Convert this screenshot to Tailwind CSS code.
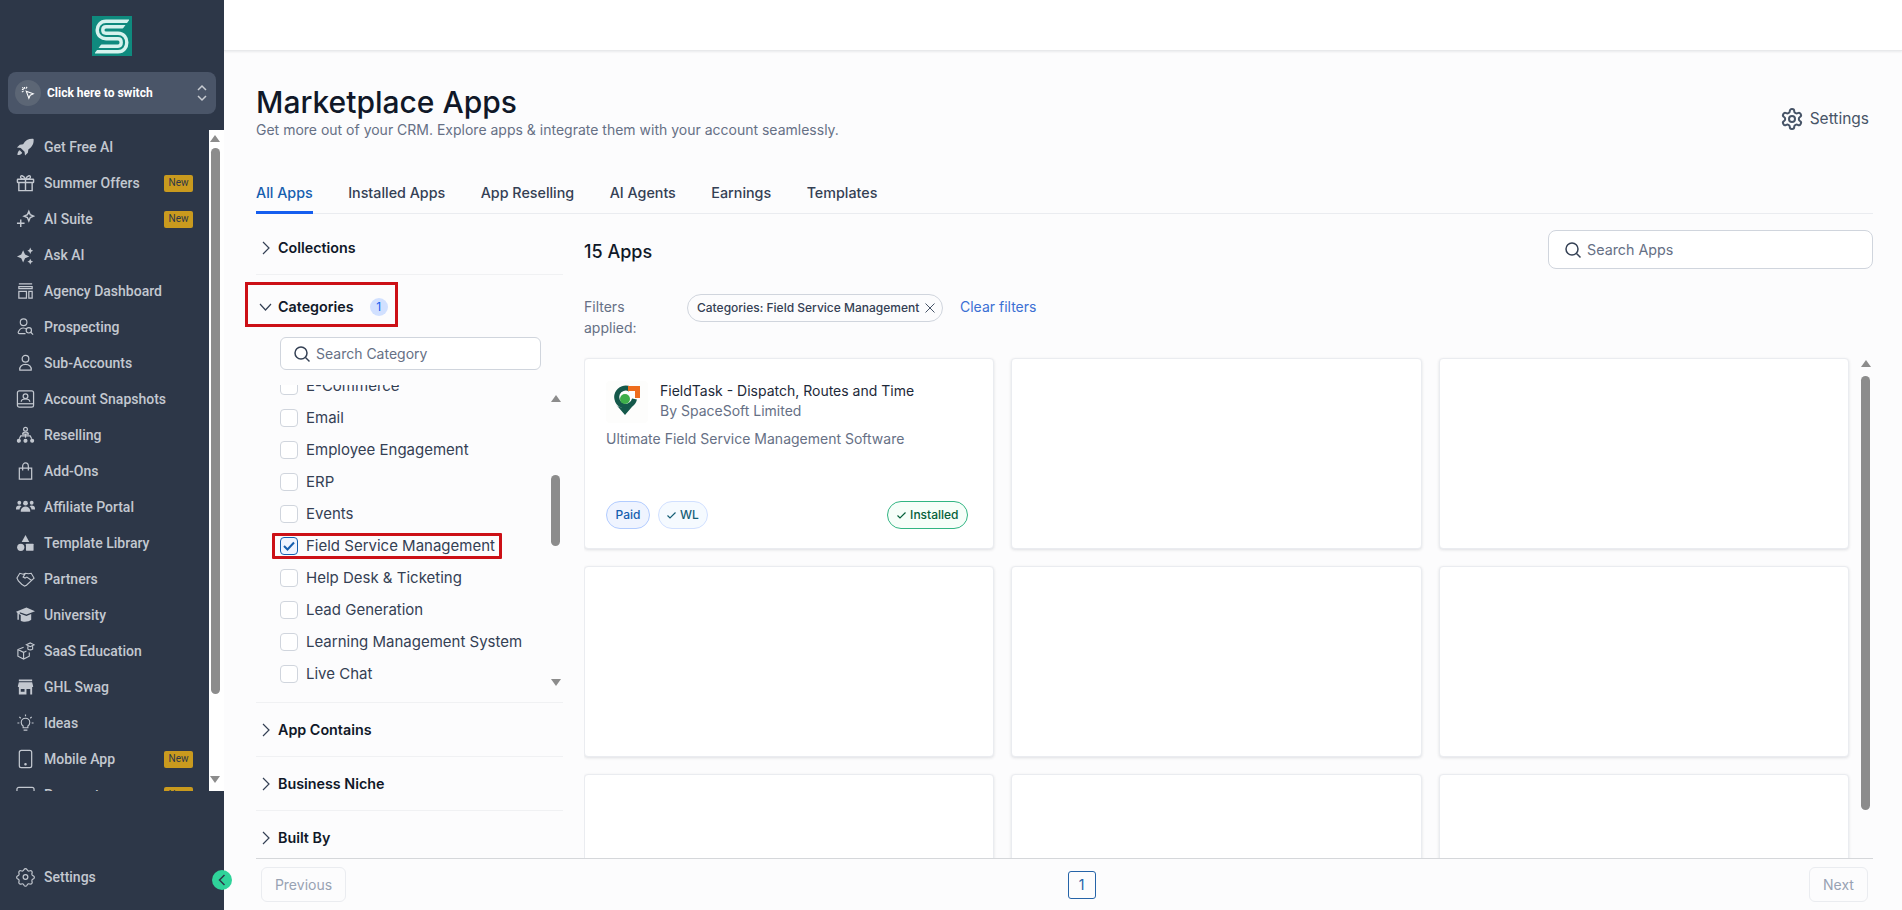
<!DOCTYPE html>
<html lang="en">
<head>
  <meta charset="UTF-8">
  <title>Marketplace Apps</title>
  <script src="https://cdn.jsdelivr.net/npm/@tailwindcss/browser@4"></script>
</head>
<body class="h-[910px] overflow-hidden bg-[#fcfcfd] font-['Inter',sans-serif] text-[#101828]">
<div class="flex h-[910px]">

  <!-- sidebar -->
  <aside class="relative flex w-[224px] shrink-0 flex-col bg-[#2d3748] font-['Roboto',sans-serif]">
    <div class="flex h-[72px] justify-center pt-4">
      <svg width="40" height="40" viewBox="0 0 40 40">
        <rect width="40" height="40" fill="#0f8a7e"/>
        <path d="M37 8H14C10 8 8 11 8 14C8 18 11 20 14 20H26C30 20 32 23 32 26.500C32 30 30 33 26 33H3" fill="none" stroke="#d6f3ee" stroke-width="9"/>
        <path d="M37 8H14C10 8 8 11 8 14C8 18 11 20 14 20H26C30 20 32 23 32 26.500C32 30 30 33 26 33H3" fill="none" stroke="#0f8a7e" stroke-width="2.200"/>
        <path d="M38 3L38 13L30.500 13zM2 38L2 28L9.500 28z" fill="#0f8a7e"/>
      </svg>
    </div>
    <div class="mx-2 flex h-[42px] items-center rounded-lg bg-[#4a5568] pl-[7px] pr-[9px]">
      <div class="flex h-[26px] w-[26px] items-center justify-center rounded-full bg-[#5c6675]">
        <svg width="14" height="14" viewBox="0 0 16 16" fill="none" stroke="#fff" stroke-width="1.200">
          <path d="M6 6l8 3-3.500 1.500L9 14z"/><path d="M4 1v2M1 4h2M1.500 1.500L3 3M7 1L5.500 3M1 7l2-1.500"/>
        </svg>
      </div>
      <span class="ml-[6px] flex-1 text-xs font-bold text-white">Click here to switch</span>
      <svg width="10" height="18" viewBox="0 0 10 18" fill="none" stroke="#c8ccd2" stroke-width="1.500"><path d="M1 6l4-4 4 4M1 12l4 4 4-4"/></svg>
    </div>

    <div class="mt-4 flex h-[661px] overflow-hidden">
      <nav class="-mt-px flex-1 overflow-hidden pl-4 pr-2 text-sm font-medium text-[#c3c8d0]">
        <a class="flex h-9 items-center gap-[9px]"><svg class="w-[19px] shrink-0" height="20" viewBox="0 0 20 20" fill="#c3c8d0"><path d="M18.500 1.500c-5-.5-8.500 1.500-11 5.500l-3.500.5L1 10.500l4 .5 4 4 .5 4 3-3 .5-3.500c4-2.500 6-6 5.500-11zM4 13.500c-1.500.5-2.500 2.500-2.500 5 2.500 0 4.500-1 5-2.500z"/></svg><span class="flex-1">Get Free AI</span></a>
        <a class="flex h-9 items-center gap-[9px]"><svg class="w-[19px] shrink-0" height="20" viewBox="0 0 20 20" fill="none" stroke="#c3c8d0" stroke-width="1.500"><rect x="1.500" y="6" width="17" height="3.500" rx=".5"/><path d="M3 9.500V18h14V9.500M10 6v12M10 6C8 1.500 4 1.500 5 4.500 5.500 6 10 6 10 6zM10 6c2-4.500 6-4.500 5-1.500C14.500 6 10 6 10 6z"/></svg><span class="flex-1">Summer Offers</span><span class="mr-2 flex h-[17px] w-[29px] items-center justify-center rounded-[2px] bg-[#c99a1e] text-[10px] font-normal text-[#2d3748]">New</span></a>
        <a class="flex h-9 items-center gap-[9px]"><svg class="w-[19px] shrink-0" height="20" viewBox="0 0 20 20" fill="none" stroke="#c3c8d0" stroke-width="1.500"><path d="M13.500 2l1.500 3.500L18.500 7 15 8.500 13.500 12 12 8.500 8.500 7 12 5.500zM5 10.500v8M1 14.500h8"/></svg><span class="flex-1">AI Suite</span><span class="mr-2 flex h-[17px] w-[29px] items-center justify-center rounded-[2px] bg-[#c99a1e] text-[10px] font-normal text-[#2d3748]">New</span></a>
        <a class="flex h-9 items-center gap-[9px]"><svg class="w-[19px] shrink-0" height="20" viewBox="0 0 20 20" fill="#c3c8d0"><path d="M7.500 5l2 4.500 4.500 2-4.500 2-2 4.500-2-4.500-4.500-2 4.500-2zM15 2l1 2.500L18 5.500 16 6.500 15 9 14 6.500 12 5.500 14 4.500zM15 14l1 2 2 1-2 1-1 2-1-2-2-1 2-1z"/></svg><span class="flex-1">Ask AI</span></a>
        <a class="flex h-9 items-center gap-[9px]"><svg class="w-[19px] shrink-0" height="20" viewBox="0 0 20 20" fill="none" stroke="#c3c8d0" stroke-width="1.300"><path d="M3 2.500h14M3 5.500h14v2H3zM3 10.500h8v7H3zM13.500 10.500H17v7h-3.500z"/></svg><span class="flex-1">Agency Dashboard</span></a>
        <a class="flex h-9 items-center gap-[9px]"><svg class="w-[19px] shrink-0" height="20" viewBox="0 0 20 20" fill="none" stroke="#c3c8d0" stroke-width="1.200"><circle cx="8" cy="5" r="3.500"/><path d="M10 17H3.500c-1 0-1.500-1-1-2 1-2 3-4 5-4 2 0 3 .5 4 1.500"/><circle cx="13.500" cy="13.500" r="2.800"/><path d="M15.500 15.500l2.500 2.500"/></svg><span class="flex-1">Prospecting</span></a>
        <a class="flex h-9 items-center gap-[9px]"><svg class="w-[19px] shrink-0" height="20" viewBox="0 0 20 20" fill="none" stroke="#c3c8d0" stroke-width="1.300"><circle cx="10" cy="5.500" r="3.500"/><path d="M4 17.500c-.5-3.500 2-6 6-6s6.500 2.500 6 6z"/></svg><span class="flex-1">Sub-Accounts</span></a>
        <a class="flex h-9 items-center gap-[9px]"><svg class="w-[19px] shrink-0" height="20" viewBox="0 0 20 20" fill="none" stroke="#c3c8d0" stroke-width="1.300"><rect x="1.500" y="1.500" width="17" height="17" rx="2"/><path d="M1.500 15h17"/><circle cx="10" cy="7" r="2.500"/><path d="M5.500 13c0-2 2-3 4.500-3s4.500 1 4.500 3"/></svg><span class="flex-1">Account Snapshots</span></a>
        <a class="flex h-9 items-center gap-[9px]"><svg class="w-[19px] shrink-0" height="20" viewBox="0 0 20 20" fill="none" stroke="#c3c8d0" stroke-width="1.300"><circle cx="10" cy="4" r="2"/><path d="M7 9c0-1.500 1.500-2 3-2s3 .5 3 2zM10 9v4M10 11H5l-1.500 3M10 11h5l1.500 3"/><circle cx="3" cy="16" r="1.500" fill="#c3c8d0"/><circle cx="10" cy="16" r="1.500" fill="#c3c8d0"/><circle cx="17" cy="16" r="1.500" fill="#c3c8d0"/></svg><span class="flex-1">Reselling</span></a>
        <a class="flex h-9 items-center gap-[9px]"><svg class="w-[19px] shrink-0" height="20" viewBox="0 0 20 20" fill="none" stroke="#c3c8d0" stroke-width="1.300"><path d="M3.500 7h13v11.500h-13zM7 9.500V5c0-2 1.500-3.500 3-3.500s3 1.500 3 3.500v4.500"/></svg><span class="flex-1">Add-Ons</span></a>
        <a class="flex h-9 items-center gap-[9px]"><svg class="w-[19px] shrink-0" height="20" viewBox="0 0 20 20" fill="#c3c8d0"><circle cx="10" cy="6" r="2.500"/><circle cx="3.500" cy="5.500" r="2"/><circle cx="16.500" cy="5.500" r="2"/><path d="M5 15c0-3.500 2-5.500 5-5.500s5 2 5 5.500zM0 11.500C0 9.500 1.500 8.500 3.500 8.500c1 0 1.700.3 2.300.8C4.800 10 4 11 3.700 12.500H0zM20 11.500c0-2-1.500-3-3.500-3-1 0-1.700.3-2.300.8 1 .7 1.800 1.700 2.100 3.200H20z"/></svg><span class="flex-1">Affiliate Portal</span></a>
        <a class="flex h-9 items-center gap-[9px]"><svg class="w-[19px] shrink-0" height="20" viewBox="0 0 20 20" fill="#c3c8d0"><path d="M10 1.500L14 9H6z"/><circle cx="5" cy="14.500" r="3.800"/><rect x="10.500" y="10.700" width="8" height="7.500" rx=".5"/></svg><span class="flex-1">Template Library</span></a>
        <a class="flex h-9 items-center gap-[9px]"><svg class="w-[19px] shrink-0" height="20" viewBox="0 0 20 20" fill="none" stroke="#c3c8d0" stroke-width="1.200"><path d="M1 9l3-5 3.500 1L10 4l3 .5L16 4l3 5-2.500 2.500-5.500 5-2 1-3-2-3.500-3.500zM10 4L7.500 8l2 1 2-1 5 3.500"/></svg><span class="flex-1">Partners</span></a>
        <a class="flex h-9 items-center gap-[9px]"><svg class="w-[19px] shrink-0" height="20" viewBox="0 0 20 20" fill="#c3c8d0"><path d="M0 6.500L11 2l9 4-9 3.500L4 7v1.500L11 11l5-2v6c-2 2-8 3-11 1v-6l-2-1v6H1.500V8z"/></svg><span class="flex-1">University</span></a>
        <a class="flex h-9 items-center gap-[9px]"><svg class="w-[19px] shrink-0" height="20" viewBox="0 0 20 20" fill="none" stroke="#c3c8d0" stroke-width="1.200"><path d="M8 6L2 8.500v7L8 18.500l6-3v-4M2 8.500l6 3v7M8 11.500l3-1.500"/><path d="M11 3.500L15 1.500l4 2-4 2zM12.500 5v3c1.500 1 3.500 1 5 0V5"/></svg><span class="flex-1">SaaS Education</span></a>
        <a class="flex h-9 items-center gap-[9px]"><svg class="w-[19px] shrink-0" height="20" viewBox="0 0 20 20" fill="#c3c8d0"><path d="M3 2h14v2H3zM3 5h14l1 4v1h-1v8h-2v-6H11v6H3v-8H2V9zM5 12h4v3H5z" fill-rule="evenodd"/></svg><span class="flex-1">GHL Swag</span></a>
        <a class="flex h-9 items-center gap-[9px]"><svg class="w-[19px] shrink-0" height="20" viewBox="0 0 20 20" fill="none" stroke="#c3c8d0" stroke-width="1.200"><path d="M10 5c-2.500 0-4.500 2-4.500 4.500 0 1.500.8 2.800 2 3.700V15h5v-1.800c1.200-.9 2-2.200 2-3.700C14.500 7 12.500 5 10 5zM8 17.500h4M10 1v2M3.500 3.500L5 5M16.500 3.500L15 5M1.500 10h2M16.500 10h2"/></svg><span class="flex-1">Ideas</span></a>
        <a class="flex h-9 items-center gap-[9px]"><svg class="w-[19px] shrink-0" height="20" viewBox="0 0 20 20" fill="none" stroke="#c3c8d0" stroke-width="1.300"><rect x="3.500" y="1" width="13" height="18" rx="2"/><circle cx="10" cy="15.500" r=".7" fill="#c3c8d0"/></svg><span class="flex-1">Mobile App</span><span class="mr-2 flex h-[17px] w-[29px] items-center justify-center rounded-[2px] bg-[#c99a1e] text-[10px] font-normal text-[#2d3748]">New</span></a>
        <a class="flex h-9 items-center gap-[9px]"><svg class="w-[19px] shrink-0" height="20" viewBox="0 0 20 20" fill="none" stroke="#c3c8d0" stroke-width="1.300"><rect x="1" y="2" width="18" height="14" rx="2"/></svg><span class="flex-1">Payments</span><span class="mr-2 flex h-[17px] w-[29px] items-center justify-center rounded-[2px] bg-[#c99a1e] text-[10px] font-normal text-[#2d3748]">New</span></a>
      </nav>
      <div class="flex w-[15px] shrink-0 flex-col items-center bg-white pr-[3px] pt-[5px]">
        <svg width="10" height="7" viewBox="0 0 10 7"><path d="M5 0l5 7H0z" fill="#8c8c8c"/></svg>
        <div class="mt-[6px] h-[546px] w-[9px] rounded-full bg-[#8c8c8c]"></div>
        <svg class="mt-auto mb-[8px]" width="10" height="7" viewBox="0 0 10 7"><path d="M0 0h10L5 7z" fill="#8c8c8c"/></svg>
      </div>
    </div>

    <div class="mt-[76px] flex items-center gap-[9px] pl-4 text-sm font-medium text-[#c3c8d0]">
      <svg width="19" height="20" viewBox="0 0 24 24" fill="none" stroke="#c3c8d0" stroke-width="1.500"><path d="M10.300 2.300a2 2 0 013.400 0l.7 1.200a2 2 0 002.200.9l1.400-.3a2 2 0 012.400 2.400l-.3 1.400a2 2 0 00.9 2.200l1.200.7a2 2 0 010 3.400l-1.200.7a2 2 0 00-.9 2.200l.3 1.400a2 2 0 01-2.400 2.400l-1.400-.3a2 2 0 00-2.200.9l-.7 1.200a2 2 0 01-3.400 0l-.7-1.200a2 2 0 00-2.200-.9l-1.400.3a2 2 0 01-2.400-2.400l.3-1.400a2 2 0 00-.9-2.200l-1.200-.7a2 2 0 010-3.400l1.200-.7a2 2 0 00.9-2.200l-.3-1.400a2 2 0 012.400-2.400l1.400.3a2 2 0 002.200-.9z"/><circle cx="12" cy="12" r="3"/></svg>
      <span>Settings</span>
    </div>
    <div class="absolute left-[212px] top-[870px] z-10 flex h-[20px] w-[20px] items-center justify-center rounded-full bg-[#2fd39a]">
      <svg width="8" height="12" viewBox="0 0 8 12" fill="none" stroke="#2d3748" stroke-width="1.500"><path d="M6.500 1L1.500 6l5 5"/></svg>
    </div>
  </aside>

  <!-- main -->
  <main class="flex min-w-0 flex-1 flex-col">
    <div class="h-[51px] shrink-0 border-b border-[#e8e9eb] bg-white shadow-[0_1px_2px_rgba(16,24,40,0.08)]"></div>

    <div class="flex min-h-0 flex-1 flex-col pl-8 pr-[29px]">
      <div class="flex h-[92px] shrink-0 items-start justify-between pt-[32px]">
        <div>
          <h1 class="text-[30px] leading-[38px] font-medium text-[#101828]">Marketplace Apps</h1>
          <p class="-mt-px text-sm leading-5 text-[#667085]">Get more out of your CRM. Explore apps &amp; integrate them with your account seamlessly.</p>
        </div>
        <div class="mt-[24px] mr-[4px] flex items-center gap-[6px] text-[15.500px] text-[#475467]">
          <svg width="24" height="24" viewBox="0 0 24 24" fill="none" stroke="#475467" stroke-width="2"><path d="M12.220 2h-.44a2 2 0 0 0-2 2v.18a2 2 0 0 1-1 1.730l-.43.25a2 2 0 0 1-2 0l-.15-.08a2 2 0 0 0-2.730.73l-.22.38a2 2 0 0 0 .73 2.730l.15.1a2 2 0 0 1 1 1.720v.51a2 2 0 0 1-1 1.740l-.15.09a2 2 0 0 0-.73 2.730l.22.38a2 2 0 0 0 2.730.73l.15-.08a2 2 0 0 1 2 0l.43.25a2 2 0 0 1 1 1.730V20a2 2 0 0 0 2 2h.44a2 2 0 0 0 2-2v-.18a2 2 0 0 1 1-1.730l.43-.25a2 2 0 0 1 2 0l.15.08a2 2 0 0 0 2.730-.73l.22-.39a2 2 0 0 0-.73-2.730l-.15-.08a2 2 0 0 1-1-1.740v-.5a2 2 0 0 1 1-1.740l.15-.09a2 2 0 0 0 .73-2.730l-.22-.38a2 2 0 0 0-2.730-.73l-.15.08a2 2 0 0 1-2 0l-.43-.25a2 2 0 0 1-1-1.730V4a2 2 0 0 0-2-2z"/><circle cx="12" cy="12" r="3"/></svg>
          Settings
        </div>
      </div>

      <div class="flex h-[71px] shrink-0 items-end gap-[35.500px] border-b border-[#eaecf0] text-[14.300px] font-medium text-[#344054]">
        <span class="-mb-px border-b-[3px] border-[#155eef] pb-[8px] text-[#155eaf]">All Apps</span>
        <span class="pb-[10px]">Installed Apps</span>
        <span class="pb-[10px]">App Reselling</span>
        <span class="pb-[10px]">AI Agents</span>
        <span class="pb-[10px]">Earnings</span>
        <span class="pb-[10px]">Templates</span>
      </div>

      <div class="flex min-h-0 flex-1 gap-[21px]">
        <!-- filters -->
        <div class="-ml-[14px] w-[321px] shrink-0 overflow-hidden pl-[14px]">
          <div class="flex h-[61px] items-center gap-2 border-b border-[#f0f1f3] pt-[8px] pl-[6px] text-[14.300px] font-semibold">
            <svg width="8" height="14" viewBox="0 0 8 14" fill="none" stroke="#344054" stroke-width="1.200"><path d="M1 1l6 6-6 6"/></svg>Collections
          </div>
          <div class="relative flex h-[62px] items-center gap-[6px] pt-[1px] pl-[3px] text-[14.300px] font-semibold">
            <div class="absolute left-[-11px] top-[7px] h-[45px] w-[153px] border-[3px] border-[#cc1016]"></div>
            <svg width="13" height="8" viewBox="0 0 13 8" fill="none" stroke="#344054" stroke-width="1.200"><path d="M1 1l5.500 6L12 1"/></svg>Categories
            <span class="ml-[10px] flex h-[18px] w-[18px] items-center justify-center rounded-full bg-[#d1e0ff] text-xs font-normal text-[#155eef]">1</span>
          </div>
          <div class="ml-[24px] flex h-[33px] w-[261px] items-center gap-[5px] rounded-md border border-[#d0d5dd] bg-white pl-[12px] text-sm text-[#667085]">
            <svg width="18" height="18" viewBox="0 0 18 18" fill="none" stroke="#344054" stroke-width="1.500"><circle cx="8" cy="8" r="6"/><path d="M12.500 12.500L16.500 16.500"/></svg>Search Category
          </div>
          <div class="relative mt-[15px] h-[318px] overflow-hidden border-b border-[#f0f1f3] pl-[24px]">
            <div class="-mt-[15px] text-[15px] text-[#344054]">
              <label class="flex h-8 items-center gap-2"><span class="h-[18px] w-[18px] rounded border border-[#d0d5dd] bg-white"></span>E-Commerce</label>
              <label class="flex h-8 items-center gap-2"><span class="h-[18px] w-[18px] rounded border border-[#d0d5dd] bg-white"></span>Email</label>
              <label class="flex h-8 items-center gap-2"><span class="h-[18px] w-[18px] rounded border border-[#d0d5dd] bg-white"></span>Employee Engagement</label>
              <label class="flex h-8 items-center gap-2"><span class="h-[18px] w-[18px] rounded border border-[#d0d5dd] bg-white"></span>ERP</label>
              <label class="flex h-8 items-center gap-2"><span class="h-[18px] w-[18px] rounded border border-[#d0d5dd] bg-white"></span>Events</label>
              <label class="relative flex h-8 items-center gap-2"><span class="flex h-[18px] w-[18px] items-center justify-center rounded border border-[#155eaf] bg-[#eff4ff]"><svg width="12" height="10" viewBox="0 0 12 10" fill="none" stroke="#155eaf" stroke-width="2"><path d="M1 5l3.500 3.500L11 1.500"/></svg></span>Field Service Management<span class="absolute left-[-8px] top-[3px] h-[26px] w-[230px] rounded-[1px] border-[3px] border-[#cc1016]"></span></label>
              <label class="flex h-8 items-center gap-2"><span class="h-[18px] w-[18px] rounded border border-[#d0d5dd] bg-white"></span>Help Desk &amp; Ticketing</label>
              <label class="flex h-8 items-center gap-2"><span class="h-[18px] w-[18px] rounded border border-[#d0d5dd] bg-white"></span>Lead Generation</label>
              <label class="flex h-8 items-center gap-2"><span class="h-[18px] w-[18px] rounded border border-[#d0d5dd] bg-white"></span>Learning Management System</label>
              <label class="flex h-8 items-center gap-2"><span class="h-[18px] w-[18px] rounded border border-[#d0d5dd] bg-white"></span>Live Chat</label>
            </div>
            <svg class="absolute left-[295px] top-[10px]" width="10" height="7" viewBox="0 0 10 7"><path d="M5 0l5 7H0z" fill="#8c8c8c"/></svg>
            <div class="absolute left-[295px] top-[90px] h-[71px] w-[9px] rounded-full bg-[#8c8c8c]"></div>
            <svg class="absolute left-[295px] top-[294px]" width="10" height="7" viewBox="0 0 10 7"><path d="M0 0h10L5 7z" fill="#8c8c8c"/></svg>
          </div>
          <div class="flex h-[54px] items-center gap-2 border-b border-[#f0f1f3] pl-[6px] text-[14.300px] font-semibold">
            <svg width="8" height="14" viewBox="0 0 8 14" fill="none" stroke="#344054" stroke-width="1.200"><path d="M1 1l6 6-6 6"/></svg>App Contains
          </div>
          <div class="flex h-[54px] items-center gap-2 border-b border-[#f0f1f3] pl-[6px] text-[14.300px] font-semibold">
            <svg width="8" height="14" viewBox="0 0 8 14" fill="none" stroke="#344054" stroke-width="1.200"><path d="M1 1l6 6-6 6"/></svg>Business Niche
          </div>
          <div class="flex h-[54px] items-center gap-2 pl-[6px] text-[14.300px] font-semibold">
            <svg width="8" height="14" viewBox="0 0 8 14" fill="none" stroke="#344054" stroke-width="1.200"><path d="M1 1l6 6-6 6"/></svg>Built By
          </div>
        </div>

        <!-- apps -->
        <div class="relative flex min-w-0 flex-1 flex-col overflow-hidden">
          <div class="flex h-[81px] shrink-0 items-start justify-between pt-[16px]">
            <h2 class="pt-[10px] text-lg leading-6 font-medium">15 Apps</h2>
            <div class="flex h-[39px] w-[325px] items-center gap-[5px] rounded-lg border border-[#d0d5dd] bg-white pl-[15px] text-[14.300px] text-[#667085]">
              <svg width="18" height="18" viewBox="0 0 18 18" fill="none" stroke="#344054" stroke-width="1.500"><circle cx="8" cy="8" r="6"/><path d="M12.500 12.500L16.500 16.500"/></svg>Search Apps
            </div>
          </div>
          <div class="flex h-[63px] shrink-0 items-start">
            <div class="w-[103px] pt-[1px] text-sm leading-[21px] text-[#667085]">Filters<br>applied:</div>
            <div class="-mt-px flex h-[28px] w-[256px] items-center gap-[6px] rounded-full border border-[#d0d5dd] bg-[#fcfcfd] pl-[9px] text-xs font-medium text-[#344054]">Categories: Field Service Management
              <svg width="10" height="10" viewBox="0 0 10 10" fill="none" stroke="#475467" stroke-width="1"><path d="M.5.5l9 9M9.500.5l-9 9"/></svg>
            </div>
            <span class="ml-[17px] text-sm leading-[24px] text-[#3b6fd4]">Clear filters</span>
          </div>
          <div class="grid w-[1265px] shrink-0 grid-cols-3 gap-[17px]">
            <div class="flex h-[191px] flex-col rounded border border-[#eaecf0] bg-white pl-[21px] pr-[22px] pt-[22px] pb-[19px] shadow-[0_1px_3px_rgba(16,24,40,0.12)]">
              <div class="flex gap-3">
                <div class="h-[42px] w-[42px] shrink-0 rounded bg-[#fdfdfc]">
                  <svg width="42" height="42" viewBox="0 0 42 42">
                    <path d="M24 8.200A9 9 0 1 0 28.500 18" fill="none" stroke="#14584a" stroke-width="5"/>
                    <path d="M10 23.500L19 34 28 23.500C25 28 13 28 10 23.500z" fill="#14584a"/>
                    <circle cx="19" cy="18" r="5" fill="#3dae49"/>
                    <path d="M22 5h12v12h-5v-7h-7z" fill="#ee6c1c"/>
                  </svg>
                </div>
                <div class="min-w-0">
                  <div class="text-sm leading-5 text-[#1d2939]">FieldTask - Dispatch, Routes and Time</div>
                  <div class="text-sm leading-5 text-[#667085]">By SpaceSoft Limited</div>
                </div>
              </div>
              <p class="mt-[6px] text-sm leading-5 text-[#667085]">Ultimate Field Service Management Software</p>
              <div class="mt-auto flex items-center gap-2 text-xs font-medium">
                <span class="flex h-[28px] w-[44px] items-center justify-center rounded-full border border-[#b2ccff] bg-[#eff4ff] text-[#155eaf]">Paid</span>
                <span class="flex h-[28px] w-[50px] items-center justify-center gap-1 rounded-full border border-[#d1e0ff] bg-[#f5faff] text-[#155e75]"><svg width="9" height="7" viewBox="0 0 9 7" fill="none" stroke="#155e75" stroke-width="1.200"><path d="M.5 3.500L3 6l5.500-5.500"/></svg>WL</span>
                <span class="ml-auto mr-[3px] flex h-[28px] w-[81px] items-center justify-center gap-1 rounded-full border border-[#32b583] bg-[#f6fef9] text-[#05603a]"><svg width="9" height="7" viewBox="0 0 9 7" fill="none" stroke="#05603a" stroke-width="1.200"><path d="M.5 3.500L3 6l5.500-5.500"/></svg>Installed</span>
              </div>
            </div>
            <div class="h-[191px] rounded border border-[#eaecf0] bg-white shadow-[0_1px_3px_rgba(16,24,40,0.12)]"></div>
            <div class="h-[191px] rounded border border-[#eaecf0] bg-white shadow-[0_1px_3px_rgba(16,24,40,0.12)]"></div>
            <div class="h-[191px] rounded border border-[#eaecf0] bg-white shadow-[0_1px_3px_rgba(16,24,40,0.12)]"></div>
            <div class="h-[191px] rounded border border-[#eaecf0] bg-white shadow-[0_1px_3px_rgba(16,24,40,0.12)]"></div>
            <div class="h-[191px] rounded border border-[#eaecf0] bg-white shadow-[0_1px_3px_rgba(16,24,40,0.12)]"></div>
            <div class="h-[191px] rounded border border-[#eaecf0] bg-white shadow-[0_1px_3px_rgba(16,24,40,0.12)]"></div>
            <div class="h-[191px] rounded border border-[#eaecf0] bg-white shadow-[0_1px_3px_rgba(16,24,40,0.12)]"></div>
            <div class="h-[191px] rounded border border-[#eaecf0] bg-white shadow-[0_1px_3px_rgba(16,24,40,0.12)]"></div>
          </div>
          <svg class="absolute left-[1277px] top-[146px]" width="10" height="7" viewBox="0 0 10 7"><path d="M5 0l5 7H0z" fill="#8c8c8c"/></svg>
          <div class="absolute left-[1277px] top-[162px] h-[434px] w-[9px] rounded-full bg-[#8c8c8c]"></div>
        </div>
      </div>
    </div>

    <div class="ml-[32px] mr-[29px] flex h-[52px] shrink-0 items-center justify-between border-t border-[#d5d7da] pl-[5px] pr-[5px] text-sm text-[#98a2b3]">
      <span class="flex h-[35px] w-[85px] items-center justify-center rounded-md border border-[#eaecf0]">Previous</span>
      <span class="ml-[8px] flex h-[28px] w-[28px] items-center justify-center rounded-[3px] border border-[#2563a8] text-[#2563a8]">1</span>
      <span class="flex h-[35px] w-[59px] items-center justify-center rounded-md border border-[#eaecf0]">Next</span>
    </div>
  </main>
</div>
</body>
</html>
